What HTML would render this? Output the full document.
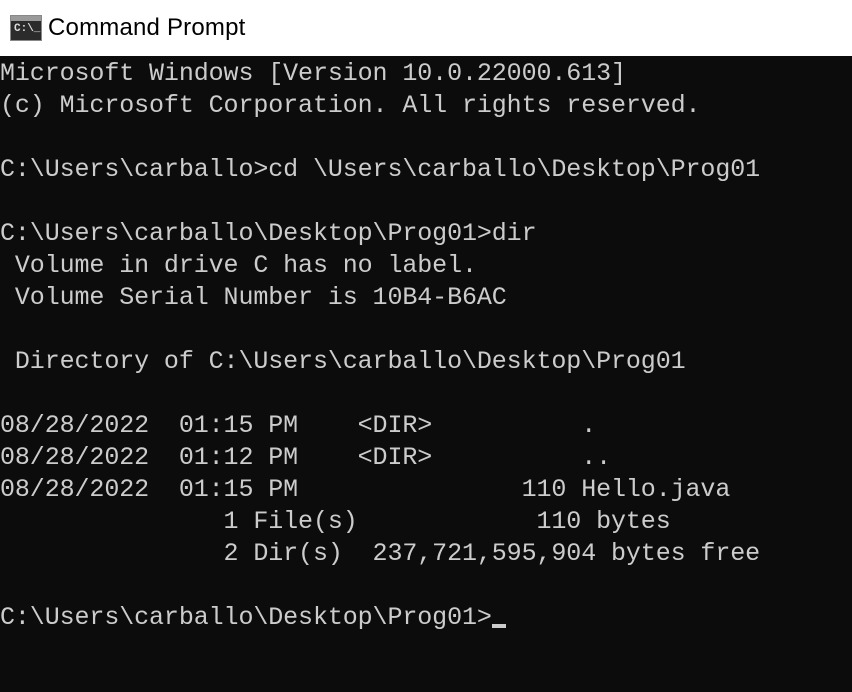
<!DOCTYPE html>
<html><head><style>
body{margin:0;width:852px;height:692px;overflow:hidden;background:#0c0c0c;}
.t{position:absolute;left:0;top:0;width:852px;height:56px;background:#fff;}
.ic{position:absolute;left:10px;top:15px;width:32px;height:26px;background:#2b2b2b;border:1px solid #888;box-sizing:border-box;}
.ic:before{content:"";position:absolute;left:0;top:0;right:0;height:5px;background:#9a9a9a;}
.ic span{position:absolute;left:3px;top:7px;color:#ddd;font:bold 11px "Liberation Mono",monospace;}
.tt{position:absolute;left:48px;top:14px;font:24px "Liberation Sans",sans-serif;color:#000;letter-spacing:0.2px;}
pre{position:absolute;left:0;top:58px;margin:0;font:25px/32px "Liberation Mono",monospace;color:#cccccc;letter-spacing:-0.1px;}
.cur{display:inline-block;width:14px;height:4px;background:#ccc;vertical-align:-4px;}
</style></head><body>
<div class="t"><div class="ic"><span>C:\_</span></div><div class="tt">Command Prompt</div></div>
<pre>Microsoft Windows [Version 10.0.22000.613]
(c) Microsoft Corporation. All rights reserved.

C:\Users\carballo>cd \Users\carballo\Desktop\Prog01

C:\Users\carballo\Desktop\Prog01>dir
 Volume in drive C has no label.
 Volume Serial Number is 10B4-B6AC

 Directory of C:\Users\carballo\Desktop\Prog01

08/28/2022  01:15 PM    &lt;DIR&gt;          .
08/28/2022  01:12 PM    &lt;DIR&gt;          ..
08/28/2022  01:15 PM               110 Hello.java
               1 File(s)            110 bytes
               2 Dir(s)  237,721,595,904 bytes free

C:\Users\carballo\Desktop\Prog01&gt;<span class="cur"></span></pre>
</body></html>
